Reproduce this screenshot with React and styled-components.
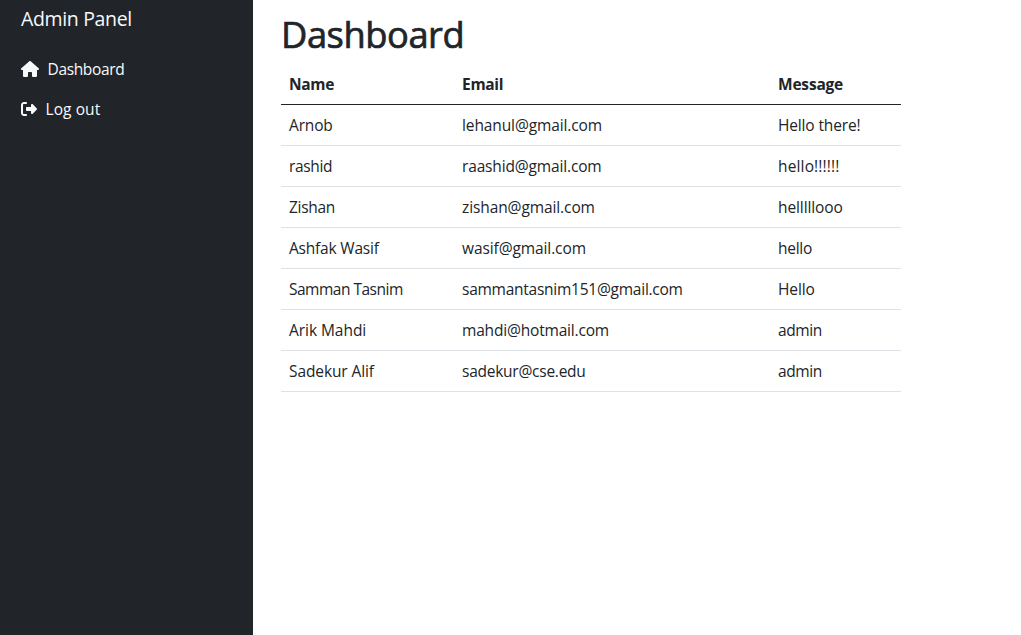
import React from "react";
import styled, { createGlobalStyle } from "styled-components";
import { FaHouse, FaRightFromBracket } from "react-icons/fa6";

const GlobalStyle = createGlobalStyle`
  *, *::before, *::after { box-sizing: border-box; }
  body {
    margin: 0;
    background: #fff;
    color: #212529;
    font-family: "Segoe UI", "Open Sans", "Noto Sans", sans-serif;
    font-size: 15.5px;
    line-height: 24px;
    overflow: hidden;
  }
`;

const Layout = styled.div`
  display: flex;
  height: 100vh;
`;

const Sidebar = styled.aside`
  flex: 0 0 253px;
  padding: 4px 21px;
  background: #212529;
  color: #f8f9fa;
`;

const Brand = styled.div`
  font-size: 19.5px;
  line-height: 30px;
  white-space: nowrap;
  letter-spacing: ${(p) => p.$track || 0}px;
`;

const Nav = styled.nav`
  display: flex;
  flex-direction: column;
  margin-top: 15px;
`;

const NavLink = styled.a`
  display: flex;
  align-items: center;
  gap: 8.5px;
  height: 40px;
  color: inherit;
  text-decoration: none;
  letter-spacing: ${(p) => p.$track || 0}px;

  svg {
    flex: none;
    width: ${(p) => p.$iconWidth}px;
    height: 16px;
  }
`;

const Main = styled.main`
  width: 648px;
  padding: 12px 0 0 28px;
`;

const Title = styled.h1`
  margin: 0 0 7px;
  font-size: 36.3px;
  font-weight: 400;
  line-height: 45px;
  letter-spacing: ${(p) => p.$track || 0}px;
  -webkit-text-stroke: 0.7px currentColor;
`;

const Table = styled.table`
  width: 620px;
  table-layout: fixed;
  border-collapse: separate;
  border-spacing: 0;
`;

const HeadCell = styled.th`
  width: ${(p) => p.$width}px;
  height: 41px;
  padding: 8px;
  border-bottom: 1px solid #212529;
  text-align: left;
  font-weight: 700;
  letter-spacing: ${(p) => p.$track || 0}px;
`;

const Cell = styled.td`
  height: 41px;
  padding: 8px;
  border-bottom: 1px solid #dee2e6;
  white-space: nowrap;
  letter-spacing: ${(p) => p.$track || 0}px;
`;

const columns = [
  { label: "Name", width: 173, track: -0.35 },
  { label: "Email", width: 316, track: -0.3 },
  { label: "Message", width: 131, track: -0.2 },
];

const messages = [
  [["Arnob", -0.15], ["lehanul@gmail.com", -0.11], ["Hello there!", -0.15]],
  [["rashid", -0.35], ["raashid@gmail.com", -0.15], ["hello!!!!!!", 0.15]],
  [["Zishan", -0.3], ["zishan@gmail.com", -0.1], ["helllllooo", -0.1]],
  [["Ashfak Wasif", -0.2], ["wasif@gmail.com", -0.1], ["hello", -0.25]],
  [["Samman Tasnim", -0.5], ["sammantasnim151@gmail.com", -0.25], ["Hello", -0.1]],
  [["Arik Mahdi", -0.05], ["mahdi@hotmail.com", -0.18], ["admin", -0.4]],
  [["Sadekur Alif", -0.1], ["sadekur@cse.edu", -0.25], ["admin", -0.4]],
];

export default function App() {
  return (
    <>
      <GlobalStyle />
      <Layout>
        <Sidebar>
          <Brand $track={-0.35}>Admin Panel</Brand>
          <Nav>
            <NavLink href="#" $iconWidth={18} $track={-0.35}><FaHouse />Dashboard</NavLink>
            <NavLink href="#" $iconWidth={16} $track={0.08}><FaRightFromBracket />Log out</NavLink>
          </Nav>
        </Sidebar>
        <Main>
          <Title $track={-0.45}>Dashboard</Title>
          <Table>
            <thead>
              <tr>
                {columns.map((c) => (
                  <HeadCell key={c.label} $width={c.width} $track={c.track}>{c.label}</HeadCell>
                ))}
              </tr>
            </thead>
            <tbody>
              {messages.map((row, i) => (
                <tr key={i}>
                  {row.map(([text, track], j) => (
                    <Cell key={j} $track={track}>{text}</Cell>
                  ))}
                </tr>
              ))}
            </tbody>
          </Table>
        </Main>
      </Layout>
    </>
  );
}
